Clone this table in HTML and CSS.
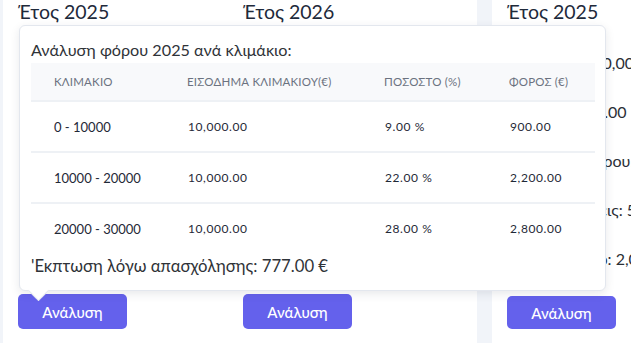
FILE: index.html
```html
<!DOCTYPE html>
<html lang="el">
<head>
<meta charset="utf-8">
<title>Υπολογισμός φόρου</title>
<link rel="stylesheet" href="styles.css">
</head>
<body>
<div class="page">
  <section class="card card-wide">
    <div class="year">
      <h2 class="year-title">Έτος 2025</h2>
      <button class="btn" type="button">Ανάλυση</button>

      <div class="popover" role="tooltip">
        <p class="popover-title">Ανάλυση φόρου 2025 ανά κλιμάκιο:</p>
        <table class="brackets">
          <colgroup>
            <col class="c1"><col class="c2"><col class="c3"><col class="c4">
          </colgroup>
          <thead>
            <tr>
              <th>Κλιμακιο</th>
              <th>Εισοδημα κλιμακιου(€)</th>
              <th>Ποσοστο (%)</th>
              <th>Φορος (€)</th>
            </tr>
          </thead>
          <tbody>
            <tr>
              <td class="range">0 - 10000</td>
              <td>10,000.00</td>
              <td>9.00 %</td>
              <td>900.00</td>
            </tr>
            <tr>
              <td class="range">10000 - 20000</td>
              <td>10,000.00</td>
              <td>22.00 %</td>
              <td>2,200.00</td>
            </tr>
            <tr>
              <td class="range">20000 - 30000</td>
              <td>10,000.00</td>
              <td>28.00 %</td>
              <td>2,800.00</td>
            </tr>
          </tbody>
        </table>
        <p class="popover-foot">'Εκπτωση λόγω απασχόλησης: 777.00 €</p>
      </div>
    </div>

    <div class="year">
      <h2 class="year-title">Έτος 2026</h2>
      <button class="btn" type="button">Ανάλυση</button>
    </div>
  </section>

  <section class="card card-narrow">
    <div class="year">
      <h2 class="year-title">Έτος 2025</h2>
      <ul class="facts">
        <li>Εισόδημα: €30,000.00</li>
        <li>Ετήσιο: 5,900.00</li>
        <li>Καταβολή φόρου: 5,123.00</li>
        <li>Παρακρατήσεις: 5,100.00</li>
        <li>Μηνιαίο ποσό: 2,000.00</li>
      </ul>
      <button class="btn" type="button">Ανάλυση</button>
    </div>
  </section>
</div>
</body>
</html>
```

FILE: styles.css
```css
* {
  box-sizing: border-box;
}

html,
body {
  margin: 0;
  background: #ffffff;
}

body {
  font-family: Lato, "Noto Sans", "DejaVu Sans", sans-serif;
  color: #1f2937;
}

.page {
  display: flex;
  gap: 15px;
  height: 343px;
  padding-left: 3px;
  background: #f1f4f9;
  overflow: hidden;
}

.card {
  background: #ffffff;
  height: 100%;
}

.card-wide {
  flex: none;
  width: 474px;
  padding: 0 9px 0 15px;
  display: grid;
  grid-template-columns: 225px 225px;
}

.card-narrow {
  flex: none;
  width: 180px;
  padding: 0 15px;
}

.year {
  position: relative;
  display: flex;
  flex-direction: column;
  height: 100%;
}

.year-title {
  margin: 0;
  font-size: 19.5px;
  font-weight: 400;
  line-height: 24px;
  color: #1e2a3b;
  white-space: nowrap;
}

.facts {
  list-style: none;
  margin: 27px 0 0;
  padding: 0;
  font-size: 16px;
  line-height: 24px;
  color: #2b2f36;
  white-space: nowrap;
}

.facts li {
  margin-bottom: 25px;
}

.btn {
  margin-top: auto;
  margin-bottom: 14px;
  width: 109px;
  height: 35px;
  border: 0;
  border-radius: 5px;
  background: #6461ec;
  color: #ffffff;
  font-family: Lato, "Noto Sans", sans-serif;
  font-size: 15px;
  font-weight: 500;
  cursor: pointer;
}

/* tooltip with the per-bracket breakdown */
.popover {
  position: absolute;
  z-index: 5;
  left: 1px;
  top: 25px;
  width: 587px;
  padding: 12px 11px 12px 11px;
  background: #ffffff;
  border: 1px solid #e3e7ee;
  border-radius: 6px;
  box-shadow: 0 3px 10px rgba(30, 41, 59, 0.10);
}

.popover::after {
  content: "";
  position: absolute;
  left: 11px;
  bottom: -8px;
  width: 14px;
  height: 14px;
  background: #ffffff;
  border-right: 1px solid #e3e7ee;
  border-bottom: 1px solid #e3e7ee;
  transform: rotate(45deg);
}

.popover-title,
.popover-foot {
  margin: 0;
  line-height: 24px;
  color: #2f3338;
  white-space: nowrap;
}

.popover-title {
  margin-bottom: 1px;
  font-size: 16.2px;
}

.popover-foot {
  margin-top: 1px;
  font-size: 16.7px;
}

.brackets {
  width: 564px;
  table-layout: fixed;
  border-collapse: collapse;
}

.brackets .c1 { width: 133px; }
.brackets .c2 { width: 197px; }
.brackets .c3 { width: 125px; }
.brackets .c4 { width: 109px; }

.brackets th {
  height: 38px;
  padding: 0 0 0 23px;
  background: #f8f9fb;
  border-bottom: 2px solid #eef1f5;
  text-align: left;
  font-size: 11.5px;
  font-weight: 400;
  letter-spacing: 0.2px;
  text-transform: uppercase;
  color: #6b7280;
  white-space: nowrap;
}

.brackets td {
  height: 51px;
  padding: 0 0 0 24px;
  border-bottom: 2px solid #eef1f5;
  font-size: 12px;
  letter-spacing: 0.6px;
  color: #1f2937;
  white-space: nowrap;
}

.brackets td.range {
  padding-left: 23px;
  font-size: 13px;
  letter-spacing: 0;
}

.brackets tbody tr:last-child td {
  border-bottom: 0;
  height: 50px;
}
```
